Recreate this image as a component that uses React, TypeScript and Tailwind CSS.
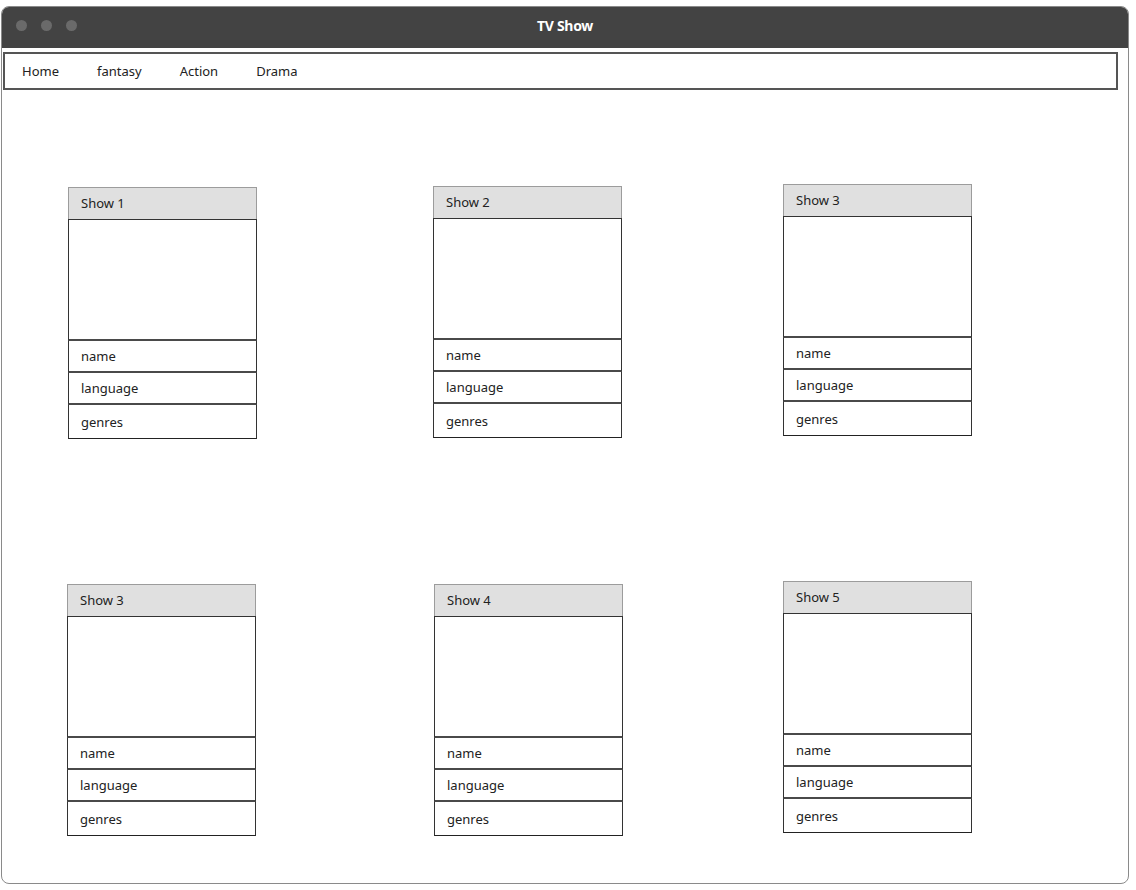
const shows = [
  [
    { title: 'Show 1', cls: 'ml-[66px] mt-0' },
    { title: 'Show 2', cls: 'ml-[176px] -mt-[1px]' },
    { title: 'Show 3', cls: 'ml-[161px] -mt-[3px]' },
  ],
  [
    { title: 'Show 3', cls: 'ml-[65px] mt-0' },
    { title: 'Show 4', cls: 'ml-[178px] mt-0' },
    { title: 'Show 5', cls: 'ml-[160px] -mt-[3px]' },
  ],
];

function ShowCard({ title, cls }: { title: string; cls: string }) {
  return (
    <div className={`w-[189px] flex flex-col ${cls}`}>
      {/* header */}
      <div className="h-[32px] pt-[1px] bg-[#e0e0e0] border border-[#9c9c9c] border-b-0 flex items-center pl-[12px]">
        {title}
      </div>
      {/* poster */}
      <div className="h-[122px] bg-white border border-[#333] border-b-[2px] border-b-[#4a4a4a]" />
      {['name', 'language', 'genres'].map((label, i) => (
        <div
          key={label}
          className={`flex items-center pl-[12px] pt-[2px] bg-white border-x border-x-[#333] ${
            i < 2 ? 'h-[32px] border-b-[2px] border-b-[#4a4a4a]' : 'h-[34px] border-b border-b-[#222]'
          }`}
        >
          {label}
        </div>
      ))}
    </div>
  );
}

export default function App() {
  return (
    <div
      className="w-[1136px] h-[890px] bg-white text-[13px] text-[#222]"
      style={{ fontFamily: '"Noto Sans", "Open Sans", sans-serif' }}
    >
      <div className="ml-[1px] pt-[6px]">
        <div className="w-[1128px] h-[878px] border border-[#8a8a8a] rounded-[8px] overflow-hidden bg-white">
          {/* title bar */}
          <div className="h-[41px] pb-[4px] bg-[#434343] flex items-center relative">
            <div className="flex items-center gap-[14px] pl-[14px]">
              <span className="w-[11px] h-[11px] rounded-full bg-[#6a6a6a]" />
              <span className="w-[11px] h-[11px] rounded-full bg-[#6a6a6a]" />
              <span className="w-[11px] h-[11px] rounded-full bg-[#6a6a6a]" />
            </div>
            <div className="absolute left-0 right-0 top-[9px] text-center text-white font-bold text-[14px] leading-[20px] tracking-[-0.3px] pointer-events-none">
              TV Show
            </div>
          </div>

          {/* nav */}
          <div className="mt-[4px] ml-[1px] w-[1115px] h-[38px] border-2 border-[#555] flex items-center pl-[17px] pt-[2px] gap-[38px]">
            <span>Home</span>
            <span>fantasy</span>
            <span>Action</span>
            <span>Drama</span>
          </div>

          {/* shows */}
          <div className="pt-[97px] flex flex-col gap-[145px]">
            {shows.map((row, r) => (
              <div key={r} className="flex items-start">
                {row.map((s, i) => (
                  <ShowCard key={i} title={s.title} cls={s.cls} />
                ))}
              </div>
            ))}
          </div>
        </div>
      </div>
    </div>
  );
}
